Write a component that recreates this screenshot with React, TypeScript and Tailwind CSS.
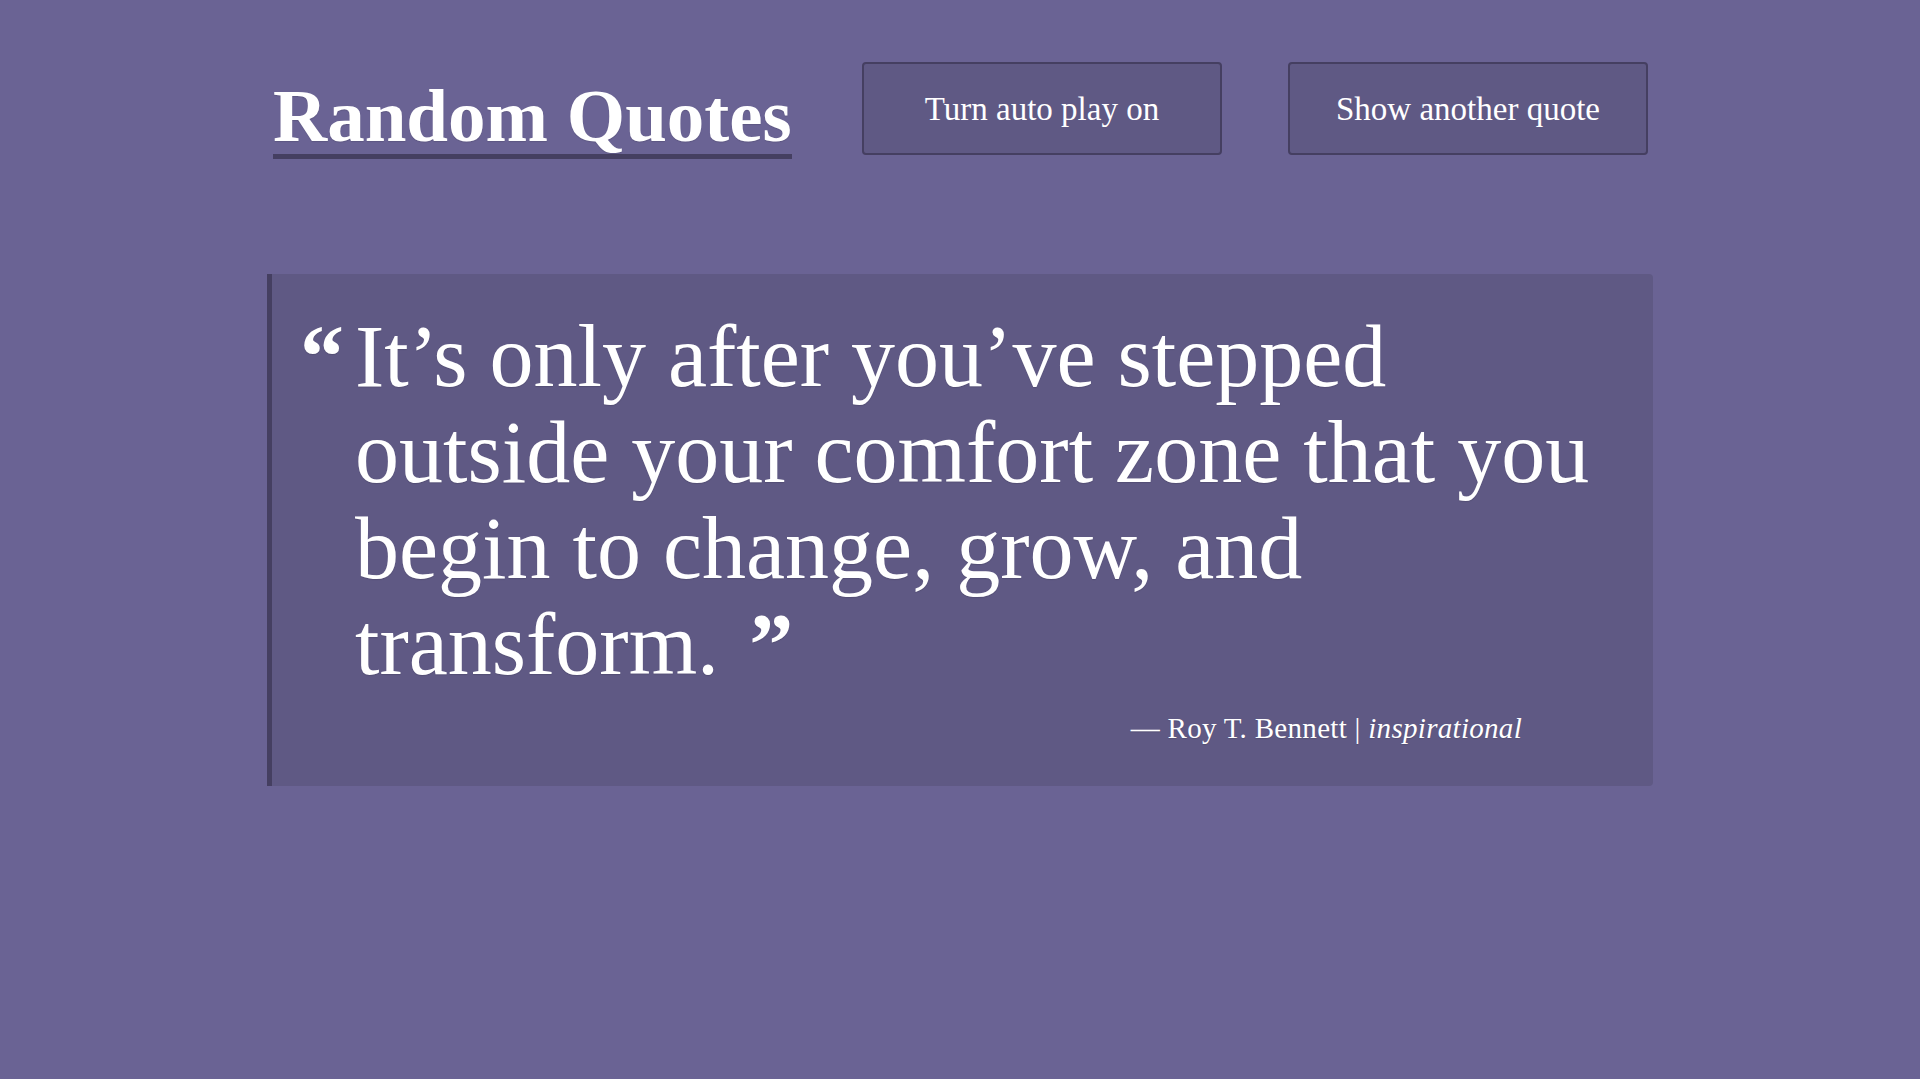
import React from 'react';

const lines = [
  'It’s only after you’ve stepped',
  'outside your comfort zone that you',
  'begin to change, grow, and',
];

const App: React.FC = () => {
  return (
    <div className="min-h-screen bg-[#6a6394] text-white font-['Liberation_Serif',serif] [text-shadow:0_1px_1px_rgba(0,0,0,0.12)]">
      <div className="mx-auto w-[1386px] pt-[62px]">
        <header className="flex items-start justify-between pl-[6px] pr-[5px]">
          <h1 className="mt-[16px] inline-block border-b-[5px] border-[#453f61] pb-px text-[75px] font-bold leading-[75px]">
            Random Quotes
          </h1>
          <div className="flex gap-[66px]">
            <button className="h-[93px] w-[360px] rounded-[4px] border-2 border-[#453f61] bg-[#5f5984] pt-[3px] text-[33px] text-white">
              Turn auto play on
            </button>
            <button className="h-[93px] w-[360px] rounded-[4px] border-2 border-[#453f61] bg-[#5f5984] pt-[3px] text-[33px] text-white">
              Show another quote
            </button>
          </div>
        </header>

        <blockquote className="mt-[115px] rounded-r-[4px] border-l-[5px] border-[#453f61] bg-[#5f5984] pb-[36px] pl-[28px] pt-[35px]">
          <div className="flex">
            <span className="w-[55px] shrink-0 text-[88px] font-bold leading-[96px]">“</span>
            <p className="text-[88px] leading-[96px]">
              {lines.map((l) => (
                <span key={l} className="block whitespace-nowrap">
                  {l}
                </span>
              ))}
              <span className="block whitespace-nowrap">
                transform.<span className="ml-[30px] font-bold">”</span>
              </span>
            </p>
          </div>
          <footer className="mt-[13px] flex justify-end pr-[131px] text-[29px] leading-[44px]">
            <span className="tracking-[0.3px]">
              — Roy T. Bennett | <em className="italic">inspirational</em>
            </span>
          </footer>
        </blockquote>
      </div>
    </div>
  );
};

export default App;
